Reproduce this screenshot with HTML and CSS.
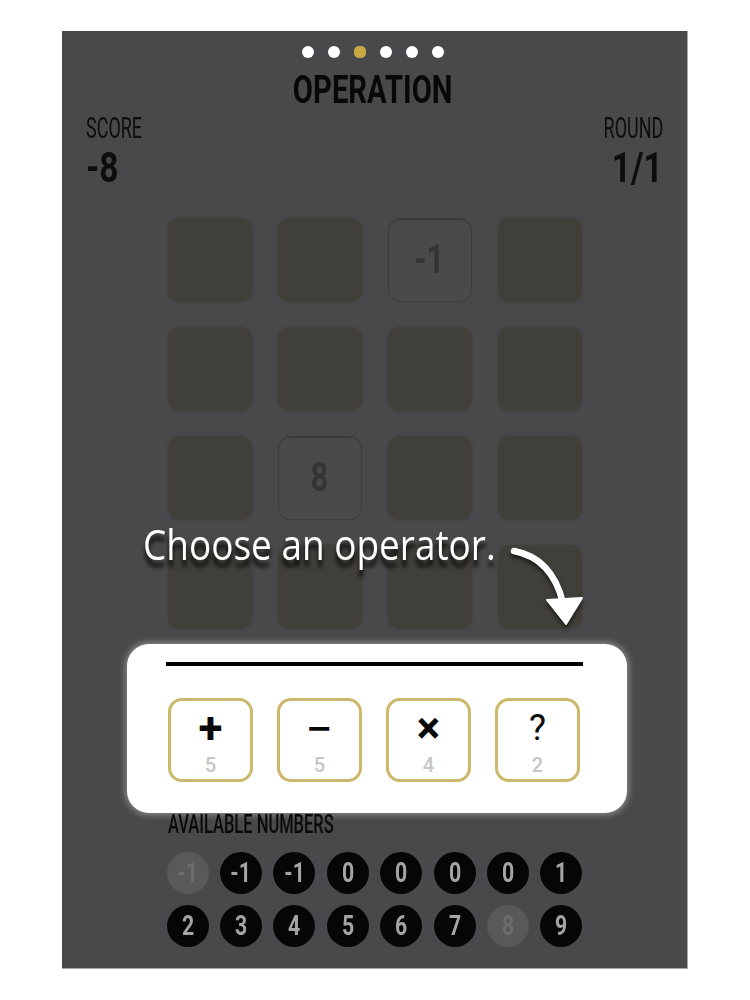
FILE: index.html
```html
<!DOCTYPE html>
<html lang="en">
<head>
<meta charset="utf-8">
<title>Operation</title>
<link rel="stylesheet" href="styles.css">
</head>
<body>
<div class="screen">
  <div class="dots">
    <span class="dot"></span>
    <span class="dot"></span>
    <span class="dot active"></span>
    <span class="dot"></span>
    <span class="dot"></span>
    <span class="dot"></span>
  </div>
  <h1 class="title"><span class="cond">OPERATION</span></h1>
  <div class="stats">
    <div class="stat">
      <div class="stat-label"><span class="cond">SCORE</span></div>
      <div class="stat-value"><span class="cond">-8</span></div>
    </div>
    <div class="stat stat-right">
      <div class="stat-label"><span class="cond">ROUND</span></div>
      <div class="stat-value"><span class="cond">1/1</span></div>
    </div>
  </div>
  <div class="board">
    <div class="tile"></div>
    <div class="tile"></div>
    <div class="tile placed"><span class="cond">-1</span></div>
    <div class="tile"></div>
    <div class="tile"></div>
    <div class="tile"></div>
    <div class="tile"></div>
    <div class="tile"></div>
    <div class="tile"></div>
    <div class="tile placed"><span class="cond">8</span></div>
    <div class="tile"></div>
    <div class="tile"></div>
    <div class="tile"></div>
    <div class="tile"></div>
    <div class="tile"></div>
    <div class="tile"></div>
  </div>
  <div class="ops-card">
    <div class="ops-line"></div>
    <div class="ops">
      <div class="op"><span class="sym">+</span><span class="cnt">5</span></div>
      <div class="op"><span class="sym sym-minus">&minus;</span><span class="cnt">5</span></div>
      <div class="op"><span class="sym">&times;</span><span class="cnt">4</span></div>
      <div class="op"><span class="sym sym-q">?</span><span class="cnt">2</span></div>
    </div>
  </div>
  <div class="avail-label"><span class="cond">AVAILABLE NUMBERS</span></div>
  <div class="numbers">
    <div class="num off"><span class="cond">-1</span></div>
    <div class="num"><span class="cond">-1</span></div>
    <div class="num"><span class="cond">-1</span></div>
    <div class="num"><span class="cond">0</span></div>
    <div class="num"><span class="cond">0</span></div>
    <div class="num"><span class="cond">0</span></div>
    <div class="num"><span class="cond">0</span></div>
    <div class="num"><span class="cond">1</span></div>
    <div class="num"><span class="cond">2</span></div>
    <div class="num"><span class="cond">3</span></div>
    <div class="num"><span class="cond">4</span></div>
    <div class="num"><span class="cond">5</span></div>
    <div class="num"><span class="cond">6</span></div>
    <div class="num"><span class="cond">7</span></div>
    <div class="num off"><span class="cond">8</span></div>
    <div class="num"><span class="cond">9</span></div>
  </div>

  <p class="hint-text">Choose an operator.</p>
  <svg class="hint-arrow" viewBox="0 0 140 110" width="140" height="110" aria-hidden="true">
    <path d="M12 15 Q50 22 61 67" fill="none" stroke="#ffffff" stroke-width="6.5" stroke-linecap="round"/>
    <polygon points="45,64 80,62 64,88" fill="#ffffff" stroke="#ffffff" stroke-width="2" stroke-linejoin="round"/>
  </svg>
</div>
</body>
</html>
```

FILE: styles.css
```css
* {
  box-sizing: border-box;
}

body {
  margin: 0;
  background: #ffffff;
  font-family: Roboto, "Liberation Sans", sans-serif;
}

.screen {
  position: relative;
  width: 626px;
  height: 938px;
  margin: 31px 0 0 62px;
  padding: 15px 24px 0;
  background: #49484b;
  border-right: 1px solid #a8a8aa;
  border-bottom: 1px solid #a8a8aa;
  overflow: hidden;
}

.cond {
  display: inline-block;
  transform: scaleX(0.78);
}

/* progress dots */
.dots {
  display: flex;
  justify-content: center;
  gap: 14px;
  height: 12px;
  margin-left: -4px;
}

.dot {
  width: 12px;
  height: 12px;
  border-radius: 50%;
  background: #ffffff;
}

.dot.active {
  background: #c9a746;
  border-radius: 40%;
}

.title {
  margin: 14px 0 0;
  text-align: center;
  font: 700 38px/36px Roboto, "Liberation Sans", sans-serif;
  color: #080808;
  margin-left: -4px;
}

.title .cond {
  transform: scaleX(0.77);
}

/* score / round */
.stats {
  display: flex;
  justify-content: space-between;
  margin-top: 6px;
  color: #0d0d0d;
}

.stat-label {
  font: 400 29px/29px Roboto, "Liberation Sans", sans-serif;
}

.stat-label .cond {
  transform: scaleX(0.62);
  transform-origin: left center;
}

.stat-value {
  margin-top: 4px;
  font: 700 42px/42px Roboto, "Liberation Sans", sans-serif;
}

.stat-value .cond {
  transform: scaleX(0.8);
  transform-origin: left center;
}

.stat-right {
  text-align: right;
}

.stat-right .cond {
  transform-origin: right center;
}

/* board */
.board {
  display: grid;
  grid-template-columns: repeat(4, 84px);
  grid-auto-rows: 84px;
  gap: 25px 26px;
  justify-content: center;
  margin-top: 29px;
}

.tile {
  border-radius: 12px;
  background: #403f3a;
  box-shadow: 0 0 3px rgba(64, 63, 58, 0.8);
}

.tile.placed {
  display: flex;
  align-items: center;
  justify-content: center;
  background: #4a494c;
  border: 1px solid #3d3c3f;
  box-shadow: inset 0 1px 0 #39383b;
  font: 700 40px/1 Roboto, "Liberation Sans", sans-serif;
  color: #343336;
}

/* highlighted operator card */
.ops-card {
  width: 500px;
  height: 169px;
  margin: 15px 0 0 41px;
  padding: 18px 39px 0;
  background: #ffffff;
  border-radius: 22px;
  box-shadow: 0 0 6px 2px rgba(255, 255, 255, 0.35);
}

.ops-line {
  height: 4px;
  margin-right: 5px;
  background: #000000;
}

.ops {
  display: flex;
  gap: 24px;
  margin-top: 32px;
  padding-left: 2px;
}

.op {
  display: flex;
  flex-direction: column;
  align-items: center;
  width: 85px;
  height: 84px;
  border: 3px solid #cbb86c;
  border-radius: 14px;
}

.sym {
  height: 36px;
  margin-top: 9px;
  font: 700 44px/36px Roboto, "Liberation Sans", sans-serif;
  color: #0a0a0a;
}

.sym-minus {
  font: 700 32px/36px "DejaVu Sans", Roboto, sans-serif;
}

.sym-q {
  font-size: 36px;
  font-weight: 400;
}

.cnt {
  margin-top: 8px;
  font: 500 20px/22px Roboto, "Liberation Sans", sans-serif;
  color: #c6c6c6;
}

/* available numbers */
.avail-label {
  margin: -1px 0 0 82px;
  font: 500 25px/25px Roboto, "Liberation Sans", sans-serif;
  color: #0a0a0a;
}

.avail-label .cond {
  transform: scaleX(0.66);
  transform-origin: left center;
}

.numbers {
  display: grid;
  grid-template-columns: repeat(8, 42px);
  grid-auto-rows: 42px;
  gap: 11px 11.4px;
  justify-content: center;
  margin-top: 15px;
}

.num {
  display: flex;
  align-items: center;
  justify-content: center;
  border-radius: 50%;
  background: #060606;
  color: #a4a4a4;
  font: 700 28px/1 Roboto, "Liberation Sans", sans-serif;
}

.num .cond {
  transform: scaleX(0.76);
}

.num.off {
  background: #59585b;
  color: #6d6c6f;
}

/* tutorial hint overlay */
.hint-text {
  position: absolute;
  left: 81px;
  top: 492px;
  margin: 0;
  font: 400 42px/42px "Open Sans", "Noto Sans", sans-serif;
  color: #ffffff;
  white-space: nowrap;
  transform: scaleX(0.88);
  transform-origin: left center;
  text-shadow: 0 7px 5px rgba(0, 0, 0, 0.9);
}

.hint-arrow {
  position: absolute;
  left: 440px;
  top: 505px;
  filter: drop-shadow(0 3px 2px rgba(0, 0, 0, 0.6));
}
```
